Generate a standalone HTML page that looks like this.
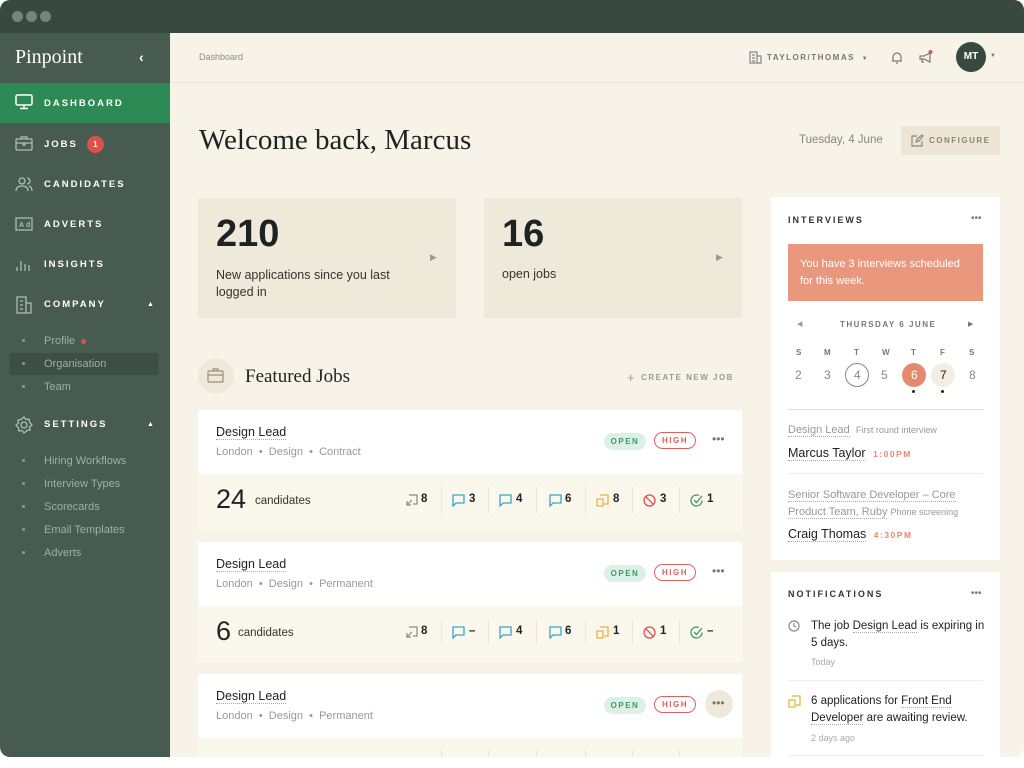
<!DOCTYPE html>
<html><head><meta charset="utf-8">
<style>
*{margin:0;padding:0;box-sizing:border-box}
body{width:1024px;height:768px;background:#fff;font-family:"Liberation Sans",sans-serif;position:relative;overflow:hidden}
.a{position:absolute}
#win{position:absolute;left:0;top:0;width:1024px;height:757px;border-radius:10px;overflow:hidden;background:#f7f3e8}
#top{left:0;top:0;width:1024px;height:33px;background:#384a40}
.dot{width:11px;height:11px;border-radius:50%;background:#74867b;top:11px}
#side{left:0;top:33px;width:170px;height:724px;background:#475b50}
.nav{left:0;width:170px;height:40px;color:#fff;font-size:9.5px;font-weight:bold;letter-spacing:2px;line-height:40px;padding-left:44px}
.nav svg{position:absolute;left:15px;top:11px}
.sub{left:44px;font-size:11px;color:#9fb0a5}
.bul{left:22px;width:3px;height:3px;border-radius:50%;background:#8a9c91}
.t{color:#222}
.card{background:#fff}
.pill{font-size:8px;font-weight:bold;letter-spacing:1.5px;border-radius:9px;height:17px;line-height:17px;text-align:center}
.st{font-size:11.5px;font-weight:bold;color:#222}
.sep{width:1px;height:26px;background:#ebe6d8}
.ul{border-bottom:1px dotted #aaa}
.lbl{font-size:9px;font-weight:bold;letter-spacing:2px;color:#333}
</style></head><body>
<div id="win">
<div class="a" id="top"></div>
<div class="a dot" style="left:12px"></div><div class="a dot" style="left:26px"></div><div class="a dot" style="left:40px"></div>
<div class="a" id="side">
 <div class="a" style="left:15px;top:13px;font-family:'Liberation Serif',serif;font-size:20px;color:#fff">Pinpoint</div>
 <div class="a" style="left:139px;top:16px;color:#fff;font-size:14px;font-weight:bold">‹</div>
 <div class="a nav" style="top:50px;background:#2d8a55;line-height:42px">DASHBOARD<svg width="18" height="16" viewBox="0 0 18 16" fill="none" stroke="#fff" stroke-width="1.5"><rect x="1" y="1" width="16" height="10" rx="1.5"/><path d="M9 11v3M5 14.5h8"/></svg></div>
 <div class="a nav" style="top:92px">JOBS<span style="display:inline-block;width:17px;height:17px;border-radius:50%;background:#e0504a;color:#fff;font-size:8px;line-height:17px;text-align:center;letter-spacing:0;margin-left:9px;vertical-align:middle">1</span><svg width="18" height="16" viewBox="0 0 18 16" fill="none" stroke="#aebdb3" stroke-width="1.3"><rect x="1" y="3" width="16" height="11" rx="1"/><path d="M6 3V1h6v2M1 7h16M8 7v2h2V7"/></svg></div>
 <div class="a nav" style="top:132px">CANDIDATES<svg width="18" height="16" viewBox="0 0 18 16" fill="none" stroke="#aebdb3" stroke-width="1.3"><circle cx="7" cy="5" r="3"/><path d="M1 15c0-4 3-5 6-5s6 1 6 5M12 2a3 3 0 0 1 0 6M14 10c2 1 3 2 3 5"/></svg></div>
 <div class="a nav" style="top:172px">ADVERTS<svg width="18" height="16" viewBox="0 0 18 16" fill="none" stroke="#aebdb3" stroke-width="1.3"><rect x="1" y="2" width="16" height="12"/><text x="4" y="11" font-size="7" fill="#aebdb3" stroke="none" font-family="Liberation Sans">Ad</text></svg></div>
 <div class="a nav" style="top:212px">INSIGHTS<svg width="18" height="16" viewBox="0 0 18 16" fill="none" stroke="#aebdb3" stroke-width="1.3"><path d="M2 15v-4M6 15V5M10 15V8M14 15v-6"/></svg></div>
 <div class="a nav" style="top:252px">COMPANY<span style="position:absolute;left:147px;font-size:7px">▲</span><svg width="18" height="18" viewBox="0 0 18 18" fill="none" stroke="#aebdb3" stroke-width="1.3"><path d="M2 1h9v16H2zM11 7h5v10h-5M5 5h3M5 9h3M5 13h3"/></svg></div>
 <div class="a bul" style="top:306px"></div><div class="a sub" style="top:302px">Profile <span style="display:inline-block;width:5px;height:5px;border-radius:50%;background:#e0504a;vertical-align:middle;margin-left:3px"></span></div>
 <div class="a" style="left:10px;top:320px;width:148px;height:22px;background:#3d4f45"></div>
 <div class="a bul" style="top:329px"></div><div class="a sub" style="top:325px">Organisation</div>
 <div class="a bul" style="top:352px"></div><div class="a sub" style="top:348px">Team</div>
 <div class="a nav" style="top:372px">SETTINGS<span style="position:absolute;left:147px;font-size:7px">▲</span><svg width="18" height="18" viewBox="0 0 18 18" fill="none" stroke="#aebdb3" stroke-width="1.3"><circle cx="9" cy="9" r="3"/><path d="M9 1l2 2.5 3-.5.5 3L17 9l-2.5 2 .5 3-3 .5L9 17l-2-2.5-3 .5-.5-3L1 9l2.5-2L3 4l3-.5z"/></svg></div>
 <div class="a bul" style="top:426px"></div><div class="a sub" style="top:422px">Hiring Workflows</div>
 <div class="a bul" style="top:449px"></div><div class="a sub" style="top:445px">Interview Types</div>
 <div class="a bul" style="top:472px"></div><div class="a sub" style="top:468px">Scorecards</div>
 <div class="a bul" style="top:495px"></div><div class="a sub" style="top:491px">Email Templates</div>
 <div class="a bul" style="top:518px"></div><div class="a sub" style="top:514px">Adverts</div>
</div>
<!-- header -->
<div class="a" style="left:170px;top:82px;width:854px;height:1px;background:#ebe5d6"></div>
<div class="a" style="left:199px;top:52px;font-size:9px;color:#8f8a80">Dashboard</div>
<svg class="a" style="left:749px;top:51px" width="13" height="13" viewBox="0 0 13 13" fill="none" stroke="#888" stroke-width="1.2"><path d="M1 1h7v11H1zM8 5h4v7H8M3 4h3M3 7h3M3 10h3"/></svg>
<div class="a lbl" style="left:767px;top:53px;font-size:8px;color:#777;letter-spacing:1.5px">TAYLOR/THOMAS <span style="font-size:6px;margin-left:3px">▼</span></div>
<svg class="a" style="left:891px;top:51px" width="12" height="13" viewBox="0 0 12 13" fill="none" stroke="#777" stroke-width="1.2"><path d="M2 10V6a4 4 0 0 1 8 0v4H1h10M5 12h2"/></svg>
<svg class="a" style="left:919px;top:50px" width="14" height="14" viewBox="0 0 14 14" fill="none" stroke="#777" stroke-width="1.2"><path d="M1 6h4l6-3v9L5 9H1zM3 9v3h2"/><circle cx="11.5" cy="2" r="2" fill="#e0504a" stroke="none"/></svg>
<div class="a" style="left:956px;top:42px;width:30px;height:30px;border-radius:50%;background:#384a40;color:#fff;font-size:10px;font-weight:bold;text-align:center;line-height:30px">MT</div>
<div class="a" style="left:990px;top:53px;font-size:6px;color:#777">▼</div>
<!-- welcome -->
<div class="a" style="left:199px;top:124px;font-family:'Liberation Serif',serif;font-size:29px;color:#222">Welcome back, Marcus</div>
<div class="a" style="left:799px;top:134px;font-size:11.5px;color:#8a857b">Tuesday, 4 June</div>
<div class="a" style="left:901px;top:126px;width:99px;height:29px;background:#ede6d5"></div>
<svg class="a" style="left:911px;top:134px" width="13" height="13" viewBox="0 0 13 13" fill="none" stroke="#888" stroke-width="1.2"><path d="M6 2H1v10h10V7M5 8l1-3 5-4 1 1-4 5z"/></svg>
<div class="a lbl" style="left:929px;top:136px;font-size:8px;color:#8a857b;letter-spacing:1.5px">CONFIGURE</div>
<!-- stats -->
<div class="a" style="left:198px;top:198px;width:258px;height:120px;background:#efe9da"></div>
<div class="a" style="left:216px;top:213px;font-size:38px;font-weight:bold;color:#1f2222">210</div>
<div class="a" style="left:216px;top:267px;font-size:12.5px;color:#333;line-height:17px">New applications since you last<br>logged in</div>
<div class="a" style="left:430px;top:252px;font-size:9px;color:#999">▶</div>
<div class="a" style="left:484px;top:198px;width:258px;height:120px;background:#efe9da"></div>
<div class="a" style="left:502px;top:213px;font-size:38px;font-weight:bold;color:#1f2222">16</div>
<div class="a" style="left:502px;top:267px;font-size:12.5px;color:#333">open jobs</div>
<div class="a" style="left:716px;top:252px;font-size:9px;color:#999">▶</div>
<!-- featured -->
<div class="a" style="left:198px;top:358px;width:36px;height:36px;border-radius:50%;background:#efe9da"></div>
<svg class="a" style="left:207px;top:368px" width="17" height="15" viewBox="0 0 17 15" fill="none" stroke="#998f80" stroke-width="1.2"><rect x="1" y="3" width="15" height="11" rx="1"/><path d="M6 3V1h5v2M1 7h15"/></svg>
<div class="a" style="left:245px;top:366px;font-family:'Liberation Serif',serif;font-size:19px;color:#222">Featured Jobs</div>
<div class="a lbl" style="left:627px;top:370px;font-size:8px;color:#999;letter-spacing:1.5px"><span style="font-size:13px;font-weight:normal;vertical-align:-2px;margin-right:5px">+</span>CREATE NEW JOB</div>

<div class="a card" style="left:198px;top:410px;width:544px;height:120px"></div>
<div class="a" style="left:198px;top:474px;width:544px;height:56px;background:#faf7ed"></div>
<div class="a card" style="left:198px;top:542px;width:544px;height:120px"></div>
<div class="a" style="left:198px;top:606px;width:544px;height:56px;background:#faf7ed"></div>
<div class="a card" style="left:198px;top:674px;width:544px;height:90px"></div>
<div class="a" style="left:198px;top:738px;width:544px;height:30px;background:#faf7ed"></div>

<div class="a t ul" style="left:216px;top:425px;font-size:12.5px">Design Lead</div>
<div class="a" style="left:216px;top:446px;font-size:11px;color:#999">London &nbsp;•&nbsp; Design &nbsp;•&nbsp; Contract</div>
<div class="a t ul" style="left:216px;top:557px;font-size:12.5px">Design Lead</div>
<div class="a" style="left:216px;top:578px;font-size:11px;color:#999">London &nbsp;•&nbsp; Design &nbsp;•&nbsp; Permanent</div>
<div class="a t ul" style="left:216px;top:689px;font-size:12.5px">Design Lead</div>
<div class="a" style="left:216px;top:710px;font-size:11px;color:#999">London &nbsp;•&nbsp; Design &nbsp;•&nbsp; Permanent</div>
<div class="a" style="left:216px;top:752px;font-size:26px;color:#222">40</div>

<div class="a pill" style="left:604px;top:433px;width:42px;background:#dcf0e6;color:#3c9a6a">OPEN</div>
<div class="a pill" style="left:654px;top:432px;width:42px;border:1.5px solid #e06060;color:#e06060;line-height:15px">HIGH</div>
<div class="a" style="left:712px;top:432px;font-size:12px;color:#777">•••</div>
<div class="a pill" style="left:604px;top:565px;width:42px;background:#dcf0e6;color:#3c9a6a">OPEN</div>
<div class="a pill" style="left:654px;top:564px;width:42px;border:1.5px solid #e06060;color:#e06060;line-height:15px">HIGH</div>
<div class="a" style="left:712px;top:564px;font-size:12px;color:#777">•••</div>
<div class="a pill" style="left:604px;top:697px;width:42px;background:#dcf0e6;color:#3c9a6a">OPEN</div>
<div class="a pill" style="left:654px;top:696px;width:42px;border:1.5px solid #e06060;color:#e06060;line-height:15px">HIGH</div>
<div class="a" style="left:705px;top:690px;width:28px;height:28px;border-radius:50%;background:#efe9da"></div>
<div class="a" style="left:712px;top:696px;font-size:12px;color:#777">•••</div>

<div class="a" style="left:216px;top:484px;font-size:27px;color:#1f2222">24</div>
<div class="a" style="left:255px;top:495px;font-size:11.5px;color:#333">candidates</div>
<div class="a" style="left:216px;top:616px;font-size:27px;color:#1f2222">6</div>
<div class="a" style="left:238px;top:627px;font-size:11.5px;color:#333">candidates</div>

<svg width="0" height="0" style="position:absolute">
<defs>
<g id="i1" fill="none" stroke="#888" stroke-width="1.2"><path d="M4 1h8v9H8M7 6l-5 5M2 7v4h4"/></g>
<g id="i2" fill="none" stroke="#3aa5c9" stroke-width="1.3"><path d="M1 1h11v8H4l-3 3z"/></g>
<g id="i3" fill="none" stroke="#e8b340" stroke-width="1.3"><path d="M4 1h8v9H8M1 5h6v7H1z"/></g>
<g id="i4" fill="none" stroke="#e05050" stroke-width="1.3"><circle cx="6.5" cy="6.5" r="5.5"/><path d="M2.7 2.7l7.6 7.6"/></g>
<g id="i5" fill="none" stroke="#3c9a6a" stroke-width="1.3"><path d="M12 6.5A5.5 5.5 0 1 1 9 1.6M4 6l2.5 2.5L12 2"/></g>
</defs></svg>

<div class="a" style="left:405px;top:494px;width:330px;height:30px">
 <svg class="a" style="left:0;top:0" width="13" height="13"><use href="#i1"/></svg><div class="a st" style="left:16px;top:-1px">8</div>
 <div class="a sep" style="left:36px;top:-7px"></div>
 <svg class="a" style="left:47px;top:0" width="13" height="13"><use href="#i2"/></svg><div class="a st" style="left:64px;top:-1px">3</div>
 <div class="a sep" style="left:83px;top:-7px"></div>
 <svg class="a" style="left:94px;top:0" width="13" height="13"><use href="#i2"/></svg><div class="a st" style="left:111px;top:-1px">4</div>
 <div class="a sep" style="left:131px;top:-7px"></div>
 <svg class="a" style="left:144px;top:0" width="13" height="13"><use href="#i2"/></svg><div class="a st" style="left:160px;top:-1px">6</div>
 <div class="a sep" style="left:180px;top:-7px"></div>
 <svg class="a" style="left:191px;top:0" width="13" height="13"><use href="#i3"/></svg><div class="a st" style="left:208px;top:-1px">8</div>
 <div class="a sep" style="left:227px;top:-7px"></div>
 <svg class="a" style="left:238px;top:0" width="13" height="13"><use href="#i4"/></svg><div class="a st" style="left:255px;top:-1px">3</div>
 <div class="a sep" style="left:274px;top:-7px"></div>
 <svg class="a" style="left:285px;top:0" width="13" height="13"><use href="#i5"/></svg><div class="a st" style="left:302px;top:-1px">1</div>
</div>
<div class="a" style="left:405px;top:626px;width:330px;height:30px">
 <svg class="a" style="left:0;top:0" width="13" height="13"><use href="#i1"/></svg><div class="a st" style="left:16px;top:-1px">8</div>
 <div class="a sep" style="left:36px;top:-7px"></div>
 <svg class="a" style="left:47px;top:0" width="13" height="13"><use href="#i2"/></svg><div class="a st" style="left:64px;top:-1px">–</div>
 <div class="a sep" style="left:83px;top:-7px"></div>
 <svg class="a" style="left:94px;top:0" width="13" height="13"><use href="#i2"/></svg><div class="a st" style="left:111px;top:-1px">4</div>
 <div class="a sep" style="left:131px;top:-7px"></div>
 <svg class="a" style="left:144px;top:0" width="13" height="13"><use href="#i2"/></svg><div class="a st" style="left:160px;top:-1px">6</div>
 <div class="a sep" style="left:180px;top:-7px"></div>
 <svg class="a" style="left:191px;top:0" width="13" height="13"><use href="#i3"/></svg><div class="a st" style="left:208px;top:-1px">1</div>
 <div class="a sep" style="left:227px;top:-7px"></div>
 <svg class="a" style="left:238px;top:0" width="13" height="13"><use href="#i4"/></svg><div class="a st" style="left:255px;top:-1px">1</div>
 <div class="a sep" style="left:274px;top:-7px"></div>
 <svg class="a" style="left:285px;top:0" width="13" height="13"><use href="#i5"/></svg><div class="a st" style="left:302px;top:-1px">–</div>
</div>
<div class="a" style="left:441px;top:750px;width:1px;height:20px;background:#ebe6d8"></div>
<div class="a" style="left:488px;top:750px;width:1px;height:20px;background:#ebe6d8"></div>
<div class="a" style="left:536px;top:750px;width:1px;height:20px;background:#ebe6d8"></div>
<div class="a" style="left:585px;top:750px;width:1px;height:20px;background:#ebe6d8"></div>
<div class="a" style="left:632px;top:750px;width:1px;height:20px;background:#ebe6d8"></div>
<div class="a" style="left:679px;top:750px;width:1px;height:20px;background:#ebe6d8"></div>

<div class="a card" style="left:771px;top:197px;width:229px;height:363px"></div>
<div class="a lbl" style="left:788px;top:215px">INTERVIEWS</div>
<div class="a" style="left:971px;top:213px;font-size:10px;color:#777">•••</div>
<div class="a" style="left:788px;top:244px;width:195px;height:57px;background:#e9987e;color:#fff;font-size:11px;line-height:17px;padding:12px 12px">You have 3 interviews scheduled for this week.</div>
<div class="a" style="left:797px;top:320px;font-size:7px;color:#999">◀</div>
<div class="a lbl" style="left:840px;top:320px;font-size:8px;color:#777;letter-spacing:1.5px">THURSDAY 6 JUNE</div>
<div class="a" style="left:968px;top:320px;font-size:7px;color:#777">▶</div>
<div class="a" style="left:788px;top:348px;width:200px;font-size:8px;color:#777;font-weight:bold">
 <span class="a" style="left:8px">S</span><span class="a" style="left:36px">M</span><span class="a" style="left:66px">T</span><span class="a" style="left:94px">W</span><span class="a" style="left:123px">T</span><span class="a" style="left:152px">F</span><span class="a" style="left:181px">S</span>
</div>
<div class="a" style="left:845px;top:363px;width:24px;height:24px;border-radius:50%;border:1px solid #888"></div>
<div class="a" style="left:902px;top:363px;width:24px;height:24px;border-radius:50%;background:#e48a6e"></div>
<div class="a" style="left:931px;top:363px;width:24px;height:24px;border-radius:50%;background:#f1eee2"></div>
<div class="a" style="left:788px;top:368px;width:200px;font-size:12px;color:#888">
 <span class="a" style="left:7px">2</span><span class="a" style="left:36px">3</span><span class="a" style="left:66px">4</span><span class="a" style="left:93px">5</span><span class="a" style="left:123px;color:#fff">6</span><span class="a" style="left:152px;color:#222">7</span><span class="a" style="left:181px">8</span>
</div>
<div class="a" style="left:912px;top:390px;width:3px;height:3px;border-radius:50%;background:#222"></div>
<div class="a" style="left:941px;top:390px;width:3px;height:3px;border-radius:50%;background:#222"></div>
<div class="a" style="left:788px;top:409px;width:195px;height:1px;background:#ddd"></div>
<div class="a" style="left:788px;top:424px;font-size:11px;color:#999"><span class="ul">Design Lead</span> <span style="font-size:9px;margin-left:3px">First round interview</span></div>
<div class="a" style="left:788px;top:446px;font-size:12.5px;color:#222"><span class="ul">Marcus Taylor</span> <span style="font-size:8.5px;color:#e48a6e;font-weight:bold;letter-spacing:1.5px;margin-left:4px">1:00PM</span></div>
<div class="a" style="left:788px;top:473px;width:195px;height:1px;background:#eee"></div>
<div class="a" style="left:788px;top:487px;font-size:11px;color:#999;line-height:17px;width:195px"><span class="ul">Senior Software Developer – Core Product Team, Ruby</span> <span style="font-size:9px">Phone screening</span></div>
<div class="a" style="left:788px;top:527px;font-size:12.5px;color:#222"><span class="ul">Craig Thomas</span> <span style="font-size:8.5px;color:#e48a6e;font-weight:bold;letter-spacing:1.5px;margin-left:4px">4:30PM</span></div>

<div class="a card" style="left:771px;top:572px;width:229px;height:200px"></div>
<div class="a lbl" style="left:788px;top:589px">NOTIFICATIONS</div>
<div class="a" style="left:971px;top:588px;font-size:10px;color:#777">•••</div>
<svg class="a" style="left:788px;top:620px" width="12" height="12" viewBox="0 0 12 12" fill="none" stroke="#888" stroke-width="1.2"><circle cx="6" cy="6" r="5"/><path d="M6 3v3l2 1"/></svg>
<div class="a" style="left:811px;top:618px;width:180px;font-size:11.5px;color:#222;line-height:17px">The job <span class="ul">Design Lead</span> is expiring in 5 days.</div>
<div class="a" style="left:811px;top:657px;font-size:9px;color:#aaa">Today</div>
<div class="a" style="left:788px;top:680px;width:195px;height:1px;background:#eee"></div>
<svg class="a" style="left:788px;top:695px" width="13" height="13"><use href="#i3"/></svg>
<div class="a" style="left:811px;top:693px;width:180px;font-size:11.5px;color:#222;line-height:17px">6 applications for <span class="ul">Front End Developer</span> are awaiting review.</div>
<div class="a" style="left:811px;top:733px;font-size:9px;color:#aaa">2 days ago</div>
<div class="a" style="left:788px;top:755px;width:195px;height:1px;background:#eee"></div>
</div>
</body></html>
